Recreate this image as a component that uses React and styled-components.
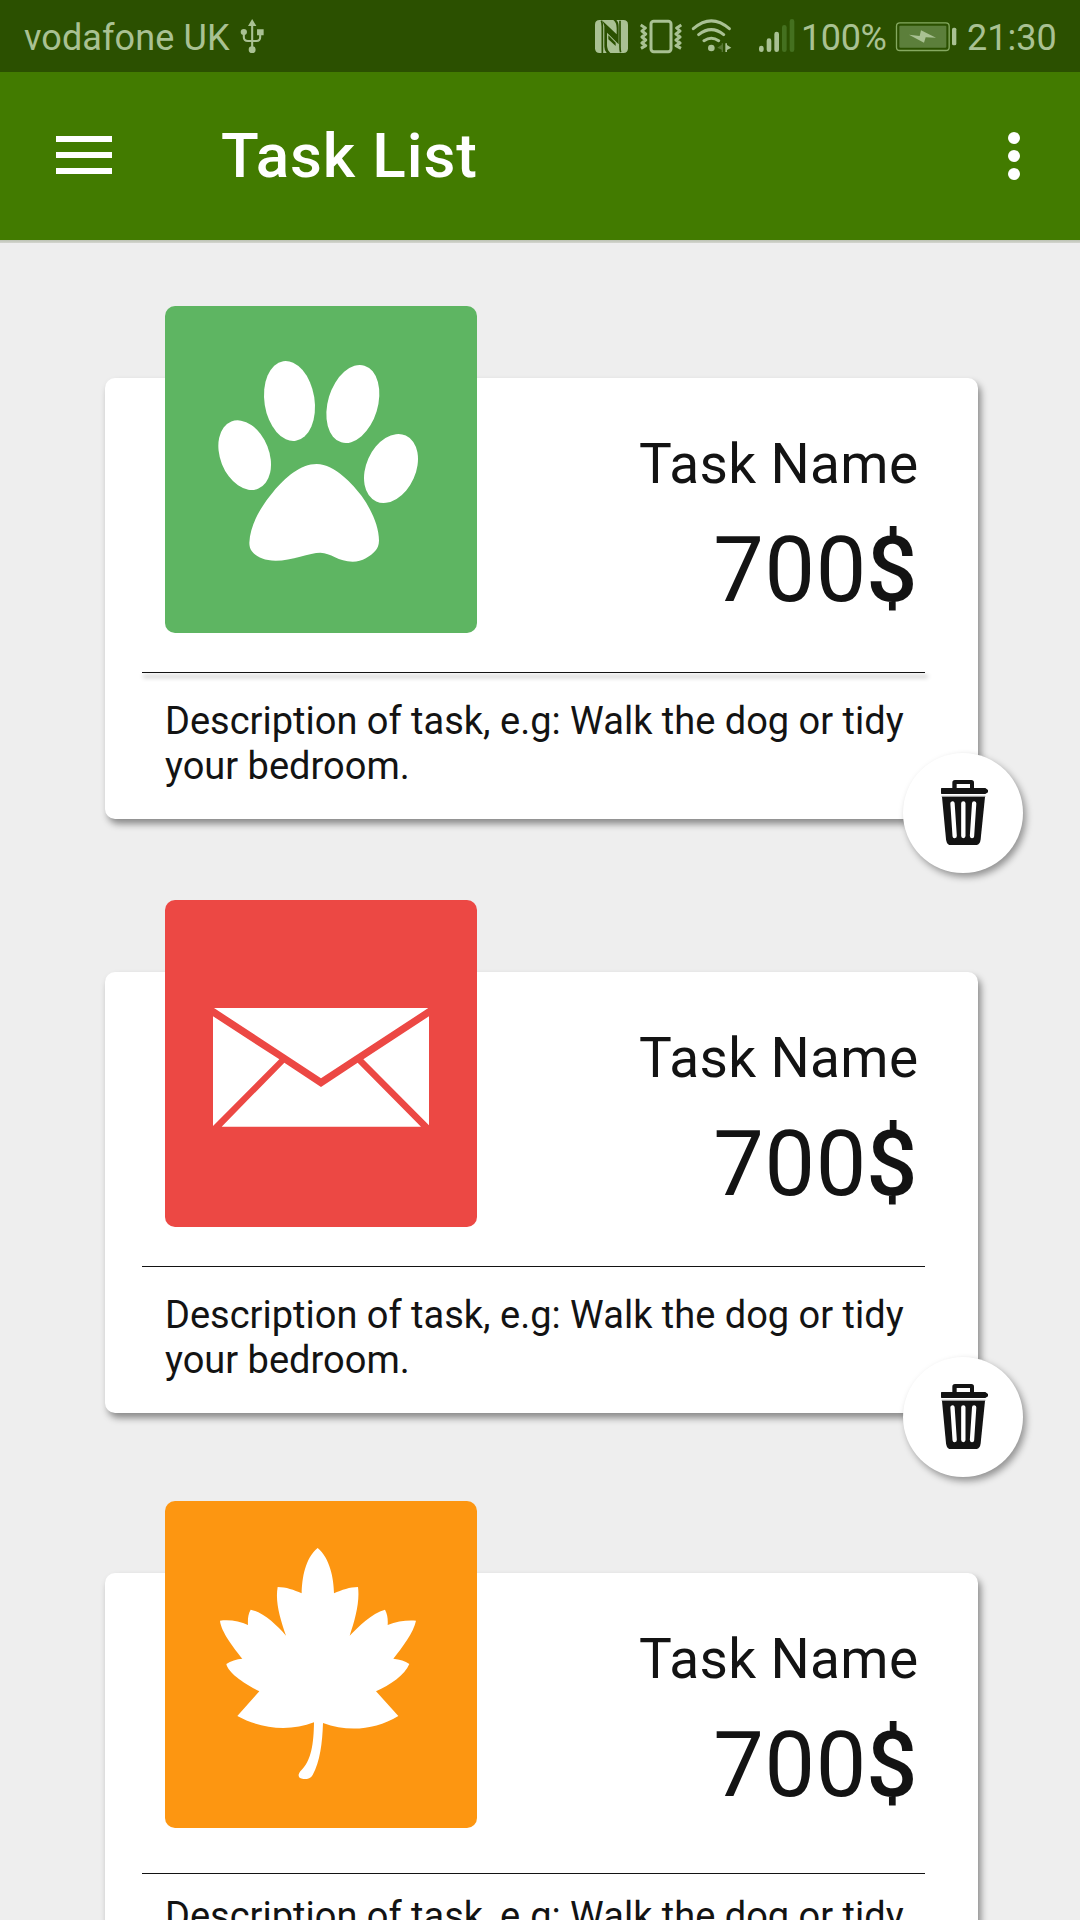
import React from "react";
import styled, { createGlobalStyle } from "styled-components";

const GlobalStyle = createGlobalStyle`
  * { box-sizing: border-box; }
  html, body { margin: 0; padding: 0; background: #eee; }
  body { font-family: Roboto, "Noto Sans", sans-serif; color: #131313; }
`;

const Screen = styled.div`
  width: 1080px;
  height: 1920px;
  overflow: hidden;
  display: flex;
  flex-direction: column;
  background: #eee;
`;

const StatusBar = styled.div`
  flex: none;
  height: 72px;
  display: flex;
  align-items: flex-start;
  padding: 18px 23px 0 24px;
  background: #2b5000;
  color: #a9c193;
`;

const StatusText = styled.span`
  width: ${(p) => p.$width}px;
  margin-left: ${(p) => p.$gap || 0}px;
  padding-top: 1px;
  font-size: 36px;
  line-height: 38px;
  letter-spacing: ${(p) => p.$track || 0}px;
  white-space: nowrap;
`;

const StatusIcon = styled.svg`
  flex: none;
  display: block;
  width: ${(p) => p.$width}px;
  height: 36px;
  margin-left: ${(p) => p.$gap || 0}px;
`;

const StatusGroup = styled.div`
  display: flex;
  margin-left: auto;
`;

const AppBar = styled.header`
  flex: none;
  height: 168px;
  display: flex;
  align-items: center;
  padding: 0 60px 0 56px;
  background: #427b00;
  color: #fff;
`;

const AppBarShade = styled.div`
  flex: none;
  height: 3px;
  background: linear-gradient(#bdc3b4, #d3d5cf);
`;

const MenuButton = styled.button`
  display: flex;
  flex-direction: column;
  gap: 10px;
  width: 56px;
  padding: 0;
  margin-top: -2px;
  border: 0;
  background: none;
`;

const MenuLine = styled.span`
  height: 6px;
  background: #fff;
`;

const Title = styled.h1`
  margin: 0 auto 0 109px;
  font-size: 62px;
  line-height: 72px;
  font-weight: 500;
  letter-spacing: 0.9px;
`;

const MoreButton = styled.button`
  display: flex;
  flex-direction: column;
  gap: 6px;
  padding: 0;
  border: 0;
  background: none;
`;

const Dot = styled.span`
  width: 12px;
  height: 12px;
  border-radius: 50%;
  background: #fff;
`;

const TaskList = styled.main`
  display: flex;
  flex-direction: column;
  padding: 135px 102px 0 105px;
`;

const Card = styled.article`
  position: relative;
  flex: none;
  height: 441px;
  margin-bottom: ${(p) => p.$after}px;
  padding: 0 53px 0 36px;
  border-radius: 10px;
  background: #fff;
  box-shadow: 3px 5px 7px rgba(0, 0, 0, 0.42);
`;

const CardHead = styled.div`
  display: flex;
  justify-content: space-between;
  height: ${(p) => p.$height}px;
  padding: 0 6px 0 24px;
`;

const Tile = styled.div`
  width: 312px;
  height: 327px;
  margin-top: -72px;
  border-radius: 10px;
  overflow: hidden;
  background: ${(p) => p.$color};
`;

const TileArt = styled.svg`
  display: block;
  width: 312px;
  height: 327px;
  fill: #fff;
`;

const Summary = styled.div`
  display: flex;
  flex-direction: column;
  align-items: flex-end;
  padding-top: 54px;
`;

const TaskName = styled.h2`
  margin: 0 0.6px 0 0;
  font-size: 55px;
  line-height: 64px;
  font-weight: 400;
  letter-spacing: 0.35px;
`;

const Reward = styled.div`
  margin-top: 22px;
  font-size: 90px;
  line-height: 106px;
  letter-spacing: 0.7px;
  b { font-weight: 500; margin: 0 1px 0 -1px; }
`;

const Divider = styled.div`
  height: 1px;
  margin: 0 0.5px;
  background: #131313;
  box-shadow: ${(p) => (p.$raised ? "2px 4px 4px 1px rgba(0, 0, 0, 0.2)" : "none")};
`;

const Description = styled.p`
  margin: ${(p) => p.$top}px -20px 0 24px;
  font-size: 38px;
  line-height: 45px;
`;

const DeleteButton = styled.button`
  position: absolute;
  top: ${(p) => p.$top}px;
  right: -45px;
  width: 120px;
  height: 120px;
  padding: 0;
  border: 0;
  border-radius: 50%;
  background: #fff;
  box-shadow: 3px 4px 7px rgba(0, 0, 0, 0.38);
  svg { display: block; }
`;

const Paw = () => (
  <TileArt viewBox="225 48 936 981">
    <ellipse rx="73.3" ry="108.6" transform="translate(464 495.5) rotate(-21.6)" />
    <ellipse rx="75.1" ry="120.9" transform="translate(598.5 333) rotate(-8.95)" />
    <ellipse rx="74.7" ry="120.1" transform="translate(788.5 342) rotate(16.85)" />
    <ellipse rx="74.3" ry="108.4" transform="translate(903 535.5) rotate(24.1)" />
    <path d="M680 522C735 522 790 585 815 618C845 660 867 710 867 752C867 765 862 775 858 780C840 800 818 815 788 815C745 815 722 788 691 788C660 788 605 812 557 812C518 812 497 798 485 783C480 775 478 768 478 758C480 700 520 640 550 605C585 563 632 522 680 522Z" />
  </TileArt>
);

const Envelope = () => (
  <TileArt viewBox="225 60 936 981">
    <path d="M372 384H1015L693 595ZM369 409L568 538L369 738ZM1017 409L820 538L1017 736ZM583 548L693 621L803 548L993 740H395Z" />
  </TileArt>
);

const Leaf = () => (
  <TileArt viewBox="225 63 936 981">
    <path d="M683 204C720 235 731 295 732 340C755 330 780 321 804 321C810 365 795 420 779 467C805 440 845 400 885 389C893 403 894 420 893 435C920 424 950 420 978 422C972 455 935 505 910 536C930 538 945 543 958 552C945 585 900 615 858 634L925 708C855 750 775 757 699 729C697 790 690 845 668 885C661 899 640 899 632 895C622 890 626 880 631 874C665 843 671 790 672 727C600 755 515 748 442 708L508 634C465 612 415 580 409 552C422 543 440 537 457 536C432 505 393 455 390 422C420 418 450 424 474 435C473 418 474 403 482 389C520 397 560 435 588 467C570 415 555 365 563 321C588 321 612 330 635 340C636 295 645 235 683 204Z" />
  </TileArt>
);

const Trash = () => (
  <svg width="120" height="120" viewBox="969 339 360 360">
    <path fill="#131313" d="M1083 446Q1083 444 1085 444H1117V428Q1117 420 1125 420H1174Q1182 420 1182 428V444H1216L1224 450V457L1216 462H1085Q1083 462 1083 460ZM1130 432V444H1170V432Z" fillRule="evenodd" />
    <path fill="#9a9a9a" d="M1085 467H1216V471H1085Z" />
    <path fill="#131313" d="M1086 471H1215L1202 598Q1200 614 1190 615H1108Q1100 613 1098 598Z" />
    <path stroke="#fff" strokeWidth="13" strokeLinecap="round" d="M1117.500 490L1124 588M1150 490V588M1182.500 490L1176 588" />
  </svg>
);

const Usb = () => (
  <StatusIcon $width={24} $gap={16} viewBox="699 54 69 108" preserveAspectRatio="none" fill="none" stroke="currentColor" strokeWidth="6">
    <path d="M734 76V146M710 102V112Q710 123 722 123H746Q757 123 757 112V100" />
    <path stroke="none" fill="currentColor" d="M734 57L746 78H722ZM701 96A9 9 0 0 1 719 96A9 9 0 0 1 701 96ZM748 88H767V106H748ZM724 149A10 10 0 0 1 744 149A10 10 0 0 1 724 149Z" />
  </StatusIcon>
);

const Nfc = () => (
  <StatusIcon $width={33} viewBox="105 54 99 108">
    <path fill="currentColor" d="M119 60H190Q204 60 204 74V145Q204 159 190 159H119Q105 159 105 145V74Q105 60 119 60Z" />
    <path fill="none" stroke="#2b5000" strokeWidth="5" d="M124 62Q127 68 127 80V159M182 157Q180 150 180 140V62" />
    <path fill="#2b5000" d="M127 62L170 103V84Q170 68 160 60H169Q176 66 176 80V133L141 98V136Q141 150 151 159H140Q133 152 133 140V78ZM145 106L167 128V138L145 118Z" />
  </StatusIcon>
);

const Vibrate = () => (
  <StatusIcon $width={42} $gap={12} viewBox="240 54 126 108" fill="none" stroke="currentColor">
    <rect x="273" y="64" width="60" height="91" rx="8" strokeWidth="9" />
    <path strokeWidth="9" strokeLinejoin="round" d="M242 75L256 84L246 93L257 102L246 111L257 120L246 129L257 137L243 145M364 75L350 84L360 93L348 102L360 111L348 120L360 129L348 137L363 145" />
  </StatusIcon>
);

const Wifi = () => (
  <StatusIcon $width={41} $gap={9} viewBox="393 54 123 108" fill="none" stroke="currentColor" strokeWidth="9" strokeLinecap="round">
    <path d="M400 86Q454 39 508 86M416 104Q454 74 491 104M432 122Q454 107 476 122" />
    <circle cx="454" cy="144" r="10" fill="currentColor" stroke="none" />
    <path fill="currentColor" stroke="none" opacity="0.35" d="M489 130V156H485V149L472 143L485 134V130Z" />
    <path fill="currentColor" stroke="none" d="M496 130H501V135L514 143L501 150V156H496Z" />
  </StatusIcon>
);

const Signal = () => (
  <StatusIcon $width={37} $gap={26} viewBox="594 54 111 108" fill="none" stroke="currentColor" strokeWidth="14" strokeLinecap="round">
    <path d="M604 144V149M627 122V149M650 102V149" />
    <path stroke="#44701f" d="M673 82V149M696 64V149" />
  </StatusIcon>
);

const Battery = () => (
  <StatusIcon $width={62} $gap={9} viewBox="1005 54 186 108">
    <rect x="1009.500" y="68.500" width="158" height="83" rx="10" fill="none" stroke="#85a960" strokeWidth="4" />
    <rect x="1018" y="77" width="141" height="66" rx="3" fill="#5c7f3b" />
    <path fill="currentColor" d="M1047 104L1079 108L1083 91L1128 113L1097 112L1092 128Z" />
    <rect x="1176" y="83" width="13" height="53" rx="5" fill="currentColor" />
  </StatusIcon>
);

const tasks = [
  { art: Paw, color: "#5eb562", head: 294, fab: 375, after: 153, raised: true },
  { art: Envelope, color: "#ec4844", head: 294, fab: 385, after: 160 },
  { art: Leaf, color: "#fd9611", head: 300, fab: 385, after: 0 },
];

export default function App() {
  return (
    <>
      <GlobalStyle />
      <Screen>
        <StatusBar>
          <StatusText $width={200} $track={0.1}>vodafone UK</StatusText>
          <Usb />
          <StatusGroup>
            <Nfc />
            <Vibrate />
            <Wifi />
            <Signal />
            <StatusText $width={85} $gap={6} $track={-0.4}>100%</StatusText>
            <Battery />
            <StatusText $width={90} $gap={10}>21:30</StatusText>
          </StatusGroup>
        </StatusBar>
        <AppBar>
          <MenuButton aria-label="Menu">
            <MenuLine />
            <MenuLine />
            <MenuLine />
          </MenuButton>
          <Title>Task List</Title>
          <MoreButton aria-label="More">
            <Dot />
            <Dot />
            <Dot />
          </MoreButton>
        </AppBar>
        <AppBarShade />
        <TaskList>
          {tasks.map(({ art: Art, color, head, fab, after, raised }) => (
            <Card key={color} $after={after}>
              <CardHead $height={head}>
                <Tile $color={color}>
                  <Art />
                </Tile>
                <Summary>
                  <TaskName>Task Name</TaskName>
                  <Reward>
                    700<b>$</b>
                  </Reward>
                </Summary>
              </CardHead>
              <Divider $raised={raised} />
              <Description $top={321 - head - 1}>
                Description of task, e.g: Walk the dog or tidy your bedroom.
              </Description>
              <DeleteButton $top={fab} aria-label="Delete">
                <Trash />
              </DeleteButton>
            </Card>
          ))}
        </TaskList>
      </Screen>
    </>
  );
}
